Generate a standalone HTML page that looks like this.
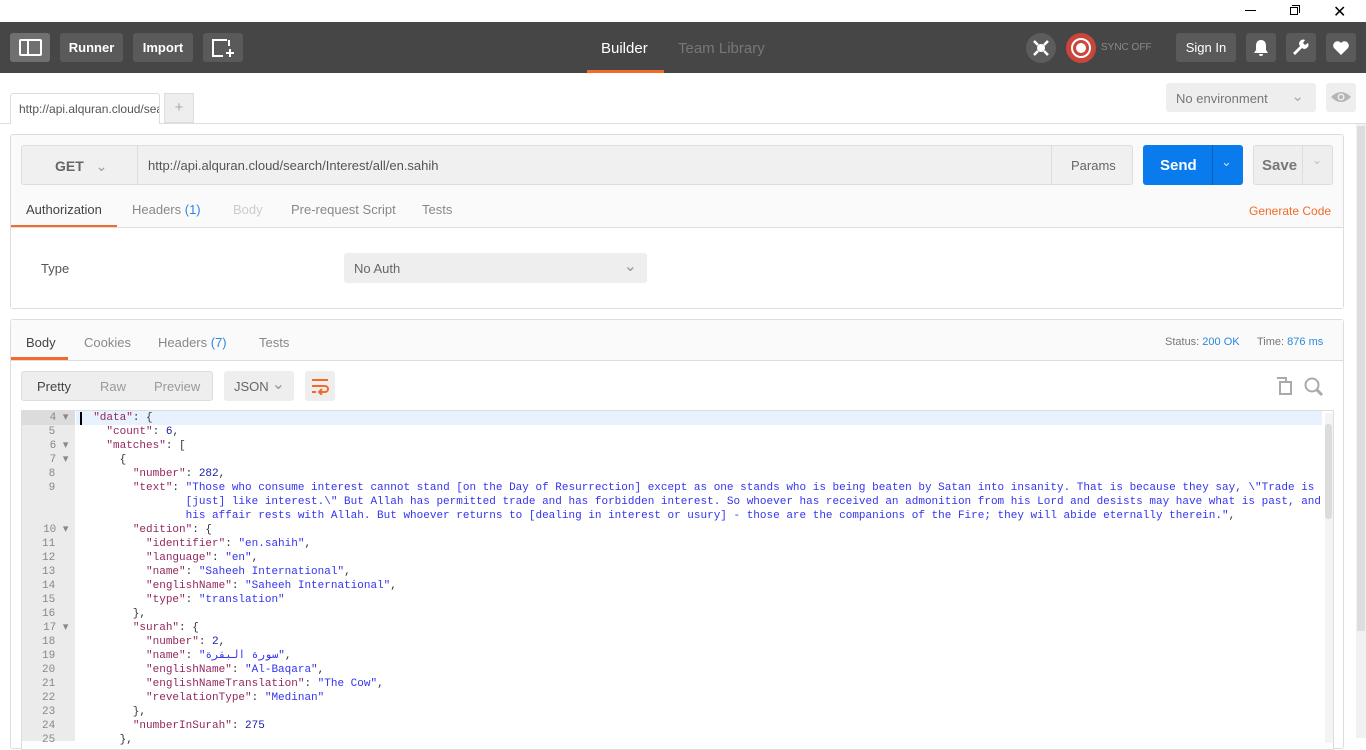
<!DOCTYPE html>
<html><head><meta charset="utf-8"><style>
*{box-sizing:border-box;margin:0;padding:0}
body{width:1366px;height:738px;overflow:hidden;background:#fff;font-family:"Liberation Sans",sans-serif;font-size:13px;color:#333;position:relative}
.a{position:absolute}
.btn{position:absolute;border-radius:3px;color:#fff;font-weight:bold;font-size:13px;display:flex;align-items:center;justify-content:center}
.code{position:absolute;left:80px;top:411px;font-family:"Liberation Mono","DejaVu Sans Mono",monospace;font-size:11px;line-height:14px;white-space:pre;color:#333}
.k{color:#92275e}.s{color:#3434ee}.n{color:#1a1aa6}
.gut{position:absolute;left:21px;top:411px;width:54px;font-family:"Liberation Mono",monospace;font-size:11px;line-height:14px;color:#888;text-align:right;white-space:pre}
</style></head><body>
<!-- title bar -->
<div class="a" style="left:1245px;top:10px;width:11px;height:1px;background:#000"></div>
<div class="a" style="left:1290px;top:7px;width:8px;height:8px;border:1px solid #000"></div>
<div class="a" style="left:1292px;top:5px;width:8px;height:8px;border-top:1px solid #000;border-right:1px solid #000"></div>
<div class="a" style="left:1333px;top:2px;font-size:16px;color:#000">✕</div>
<!-- header -->
<div class="a" style="left:0;top:22px;width:1366px;height:51px;background:#464646"></div>
<div class="btn" style="left:10px;top:33px;width:40px;height:29px;background:#707070"><div style="width:23px;height:17px;border:2px solid #fff;border-radius:2px;position:relative"><div style="position:absolute;left:6px;top:0;width:2px;height:13px;background:#fff"></div></div></div>
<div class="btn" style="left:60px;top:33px;width:63px;height:29px;background:#5a5a5a">Runner</div>
<div class="btn" style="left:133px;top:33px;width:60px;height:29px;background:#5a5a5a">Import</div>
<div class="btn" style="left:203px;top:33px;width:40px;height:29px;background:#5a5a5a"><svg width="24" height="20"><path d="M16 2H2v16h10M18 2v6M15 15h8M19 11v8" stroke="#fff" stroke-width="2" fill="none"/></svg></div>
<div class="a" style="left:601px;top:40px;color:#fff;font-size:15px">Builder</div>
<div class="a" style="left:587px;top:70px;width:77px;height:3px;background:#f26b29"></div>
<div class="a" style="left:678px;top:40px;color:#777;font-size:15px">Team Library</div>
<div class="a" style="left:1026px;top:33px;width:30px;height:30px;border-radius:50%;background:#5c5c5c"></div>
<svg class="a" style="left:1031px;top:38px" width="20" height="20"><circle cx="10" cy="10" r="4" fill="#fff"/><path d="M3 3l4 4M17 17l-4-4M17 3l-4 4M3 17l4-4" stroke="#fff" stroke-width="2.5"/></svg>
<div class="a" style="left:1066px;top:33px;width:30px;height:30px;border-radius:50%;background:#c9463d"></div>
<svg class="a" style="left:1066px;top:33px" width="30" height="30"><circle cx="15" cy="15" r="9" stroke="#fff" stroke-width="2" fill="none"/><circle cx="15" cy="15" r="5" fill="#fff"/></svg>
<div class="a" style="left:1101px;top:42px;color:#8a8a8a;font-size:10px">SYNC OFF</div>
<div class="btn" style="left:1176px;top:33px;width:60px;height:29px;background:#5a5a5a;font-weight:normal">Sign In</div>
<div class="btn" style="left:1246px;top:33px;width:30px;height:29px;background:#5a5a5a"><svg width="16" height="18"><path d="M8 1c-3 0-5 2-5 6v4l-2 3h14l-2-3V7c0-4-2-6-5-6zM6 15a2 2 0 0 0 4 0z" fill="#fff"/></svg></div>
<div class="btn" style="left:1286px;top:33px;width:30px;height:29px;background:#5a5a5a"><svg width="18" height="18"><path d="M3 16l7-7a4 4 0 0 0 6-5l-3 2-2-2 2-3a4 4 0 0 0-5 6l-7 7z" fill="#fff"/></svg></div>
<div class="btn" style="left:1326px;top:33px;width:30px;height:29px;background:#5a5a5a"><svg width="18" height="16"><path d="M9 15L2 8a4 4 0 0 1 7-5 4 4 0 0 1 7 5z" fill="#fff"/></svg></div>
<!-- tabs row -->
<div class="a" style="left:0;top:123px;width:1366px;height:1px;background:#ddd"></div>
<div class="a" style="left:10px;top:93px;width:150px;height:31px;border:1px solid #ddd;border-bottom:none;background:#fff;padding:8px 0 0 8px;font-size:12px;color:#555;overflow:hidden;white-space:nowrap;border-radius:3px 3px 0 0">http://api.alquran.cloud/sea</div>
<div class="a" style="left:164px;top:93px;width:30px;height:30px;background:#eee;border:1px solid #ddd;color:#aaa;font-size:15px;text-align:center;line-height:28px">+</div>
<div class="a" style="left:1166px;top:83px;width:150px;height:29px;background:#eee;border-radius:3px;padding:8px 10px;color:#777;font-size:13px">No environment<span style="position:absolute;right:12px;top:4px;color:#aaa;font-size:15px">⌄</span></div>
<div class="a" style="left:1326px;top:83px;width:30px;height:29px;background:#eee;border-radius:3px"><svg style="margin:7px 4px" width="22" height="14"><path d="M1 7q10-10 20 0q-10 10-20 0z" fill="#b5b5b5"/><circle cx="11" cy="7" r="3.5" fill="#eee"/><circle cx="11" cy="7" r="2" fill="#b5b5b5"/></svg></div>
<!-- page scrollbar -->
<div class="a" style="left:1356px;top:124px;width:10px;height:614px;background:#f1f1f1"></div>
<div class="a" style="left:1357px;top:126px;width:8px;height:505px;background:#ddd"></div>
<!-- request panel -->
<div class="a" style="left:10px;top:134px;width:1334px;height:175px;border:1px solid #ddd;border-radius:3px;background:#fafafa"></div>
<div class="a" style="left:11px;top:228px;width:1332px;height:80px;background:#fff"></div>
<div class="a" style="left:21px;top:145px;width:1112px;height:40px;border:1px solid #ddd;border-radius:3px;background:#f0f0f0"></div>
<div class="a" style="left:137px;top:145px;width:1px;height:40px;background:#ddd"></div>
<div class="a" style="left:1051px;top:145px;width:1px;height:40px;background:#ddd"></div>
<div class="a" style="left:55px;top:158px;font-weight:bold;color:#666;font-size:14px">GET <span style="font-weight:normal;color:#999;margin-left:8px">⌄</span></div>
<div class="a" style="left:148px;top:158px;color:#555;font-size:13px">http://api.alquran.cloud/search/Interest/all/en.sahih</div>
<div class="a" style="left:1071px;top:158px;color:#666;font-size:13px">Params</div>
<div class="a" style="left:1143px;top:145px;width:100px;height:40px;background:#097bed;border-radius:3px"></div>
<div class="a" style="left:1212px;top:145px;width:1px;height:40px;background:#0a5fb8"></div>
<div class="a" style="left:1160px;top:157px;color:#fff;font-weight:bold;font-size:15px">Send</div>
<div class="a" style="left:1221px;top:154px;color:#cde;font-size:13px">⌄</div>
<div class="a" style="left:1253px;top:145px;width:80px;height:40px;background:#eee;border:1px solid #ddd;border-radius:3px"></div>
<div class="a" style="left:1302px;top:145px;width:1px;height:40px;background:#ddd"></div>
<div class="a" style="left:1262px;top:157px;color:#777;font-weight:bold;font-size:15px">Save</div>
<div class="a" style="left:1312px;top:153px;color:#bbb;font-size:12px">⌄</div>
<div class="a" style="left:26px;top:202px;color:#444">Authorization</div>
<div class="a" style="left:11px;top:225px;width:106px;height:3px;background:#f26b29"></div>
<div class="a" style="left:132px;top:202px;color:#888">Headers <span style="color:#2d88de">(1)</span></div>
<div class="a" style="left:233px;top:202px;color:#ccc">Body</div>
<div class="a" style="left:291px;top:202px;color:#888">Pre-request Script</div>
<div class="a" style="left:422px;top:202px;color:#888">Tests</div>
<div class="a" style="left:1249px;top:204px;color:#f26b29;font-size:12px">Generate Code</div>
<div class="a" style="left:11px;top:227px;width:1332px;height:1px;background:#ddd"></div>
<div class="a" style="left:41px;top:261px;color:#555">Type</div>
<div class="a" style="left:344px;top:253px;width:303px;height:30px;background:#eee;border-radius:3px;padding:8px 10px;color:#666">No Auth<span style="position:absolute;right:10px;top:3px;color:#999;font-size:16px">⌄</span></div>
<!-- response panel -->
<div class="a" style="left:10px;top:319px;width:1334px;height:430px;border:1px solid #ddd;border-radius:3px;background:#fff"></div>
<div class="a" style="left:11px;top:320px;width:1332px;height:40px;background:#fafafa"></div>
<div class="a" style="left:11px;top:360px;width:1332px;height:1px;background:#ddd"></div>
<div class="a" style="left:26px;top:335px;color:#444">Body</div>
<div class="a" style="left:11px;top:357px;width:57px;height:3px;background:#f26b29"></div>
<div class="a" style="left:84px;top:335px;color:#888">Cookies</div>
<div class="a" style="left:158px;top:335px;color:#888">Headers <span style="color:#2d88de">(7)</span></div>
<div class="a" style="left:259px;top:335px;color:#888">Tests</div>
<div class="a" style="left:1165px;top:336px;font-size:11px;color:#777">Status: <span style="color:#2d88de">200 OK</span></div>
<div class="a" style="left:1257px;top:336px;font-size:11px;color:#777">Time: <span style="color:#2d88de">876 ms</span></div>
<div class="a" style="left:21px;top:371px;width:192px;height:30px;background:#eee;border:1px solid #ddd;border-radius:3px"></div>
<div class="a" style="left:37px;top:379px;color:#444">Pretty</div>
<div class="a" style="left:100px;top:379px;color:#999">Raw</div>
<div class="a" style="left:154px;top:379px;color:#999">Preview</div>
<div class="a" style="left:224px;top:371px;width:70px;height:30px;background:#eee;border-radius:3px;padding:8px 10px;color:#666">JSON<span style="position:absolute;right:9px;top:3px;color:#999;font-size:16px">⌄</span></div>
<div class="a" style="left:305px;top:371px;width:30px;height:30px;background:#eee;border-radius:3px"><svg style="margin:6px" width="18" height="18"><path d="M1 3h16M1 9h13a3 3 0 0 1 0 6H9M11 12l-3 3 3 3M1 15h4" stroke="#f26b29" stroke-width="2" fill="none"/></svg></div>
<svg class="a" style="left:1275px;top:376px" width="20" height="20"><path d="M2 2h9v3M5 6h11v12H5z" stroke="#aaa" stroke-width="2" fill="none"/></svg>
<svg class="a" style="left:1303px;top:376px" width="22" height="22"><circle cx="9" cy="9" r="6.5" stroke="#aaa" stroke-width="2" fill="none"/><path d="M14 14l5 5" stroke="#aaa" stroke-width="3"/></svg>
<!-- editor -->
<div class="a" style="left:21px;top:410px;width:1313px;height:340px;border:1px solid #ddd;background:#fff"></div>
<div class="a" style="left:22px;top:411px;width:53px;height:330px;background:#ebebeb"></div>
<div class="a" style="left:22px;top:411px;width:53px;height:14px;background:#dcdcdc"></div>
<div class="a" style="left:76px;top:411px;width:1246px;height:14px;background:#e8f2fe"></div>
<div class="a" style="left:80px;top:412px;width:2px;height:13px;background:#000"></div>
<div class="a" style="left:1325px;top:413px;width:8px;height:330px;background:#f4f4f4"></div>
<div class="a" style="left:1325px;top:424px;width:7px;height:95px;background:#dcdcdc;border-radius:3px"></div>
<div class="gut">4 ▾ 
5   
6 ▾ 
7 ▾ 
8   
9   
    
    
10 ▾ 
11   
12   
13   
14   
15   
16   
17 ▾ 
18   
19   
20   
21   
22   
23   
24   
25   </div>
<div class="code">  <span class="k">"data"</span>: {
    <span class="k">"count"</span>: <span class="n">6</span>,
    <span class="k">"matches"</span>: [
      {
        <span class="k">"number"</span>: <span class="n">282</span>,
        <span class="k">"text"</span>: <span class="s">"Those who consume interest cannot stand [on the Day of Resurrection] except as one stands who is being beaten by Satan into insanity. That is because they say, \"Trade is</span>
<span class="s">                [just] like interest.\" But Allah has permitted trade and has forbidden interest. So whoever has received an admonition from his Lord and desists may have what is past, and</span>
<span class="s">                his affair rests with Allah. But whoever returns to [dealing in interest or usury] - those are the companions of the Fire; they will abide eternally therein."</span>,
        <span class="k">"edition"</span>: {
          <span class="k">"identifier"</span>: <span class="s">"en.sahih"</span>,
          <span class="k">"language"</span>: <span class="s">"en"</span>,
          <span class="k">"name"</span>: <span class="s">"Saheeh International"</span>,
          <span class="k">"englishName"</span>: <span class="s">"Saheeh International"</span>,
          <span class="k">"type"</span>: <span class="s">"translation"</span>
        },
        <span class="k">"surah"</span>: {
          <span class="k">"number"</span>: <span class="n">2</span>,
          <span class="k">"name"</span>: <span class="s">"سورة البقرة"</span>,
          <span class="k">"englishName"</span>: <span class="s">"Al-Baqara"</span>,
          <span class="k">"englishNameTranslation"</span>: <span class="s">"The Cow"</span>,
          <span class="k">"revelationType"</span>: <span class="s">"Medinan"</span>
        },
        <span class="k">"numberInSurah"</span>: <span class="n">275</span>
      },</div>
</body></html>
